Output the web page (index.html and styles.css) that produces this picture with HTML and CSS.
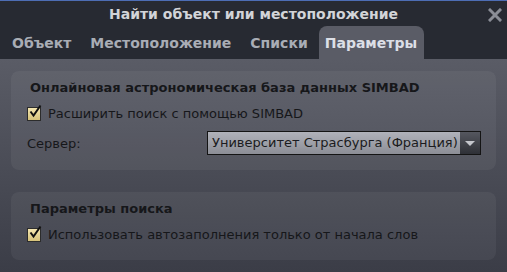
FILE: index.html
```html
<!DOCTYPE html>
<html lang="ru">
<head>
  <meta charset="UTF-8">
  <title>Найти объект или местоположение</title>
  <link rel="stylesheet" href="styles.css">
</head>
<body>
  <div class="dialog">
    <div class="header">
      <div class="titleRow">
        <span class="title">Найти объект или местоположение</span>
        <span class="close">
          <svg width="14" height="14" viewBox="0 0 14 14">
            <path d="M2 2 L12 12 M12 2 L2 12" stroke="#8a8d96" stroke-width="3" stroke-linecap="square"/>
          </svg>
        </span>
      </div>
      <div class="tabs">
        <div class="tab">Объект</div>
        <div class="tab">Местоположение</div>
        <div class="tab">Списки</div>
        <div class="tab active">Параметры</div>
      </div>
    </div>

    <div class="content">
      <div class="group">
        <div class="groupTitle">Онлайновая астрономическая база данных SIMBAD</div>
        <label class="check">
          <span class="box">
            <svg width="16" height="16" viewBox="0 0 16 16">
              <path d="M3.5 7.5 L6.5 11.5 L13.5 1.5" fill="none" stroke="#111" stroke-width="2"/>
            </svg>
          </span>
          Расширить поиск с помощью SIMBAD
        </label>
        <div class="row">
          <span>Сервер:</span>
          <div class="select">
            <span class="selectText">Университет Страсбурга (Франция)</span>
            <span class="arrow"></span>
          </div>
        </div>
      </div>

      <div class="group second">
        <div class="groupTitle">Параметры поиска</div>
        <label class="check">
          <span class="box">
            <svg width="16" height="16" viewBox="0 0 16 16">
              <path d="M3.5 7.5 L6.5 11.5 L13.5 1.5" fill="none" stroke="#111" stroke-width="2"/>
            </svg>
          </span>
          Использовать автозаполнения только от начала слов
        </label>
      </div>
    </div>
  </div>
</body>
</html>
```

FILE: styles.css
```css
body {
  margin: 0;
  padding: 0;
  font-family: 'DejaVu Sans', Verdana, sans-serif;
  font-size: 13px;
  background: #3c3e48;
}

.dialog {
  width: 507px;
  height: 272px;
  display: flex;
  flex-direction: column;
  overflow: hidden;
}

.header {
  background: #272a32;
  border-top: 1px solid #4d6db4;
}

.titleRow {
  height: 25px;
  display: flex;
  align-items: center;
  justify-content: center;
  position: relative;
}

.title {
  color: #d2d4d8;
  font-weight: bold;
  font-size: 14px;
}

.close {
  position: absolute;
  right: 5px;
  top: 7px;
  height: 14px;
}

.tabs {
  display: flex;
  padding-left: 2px;
  height: 33px;
  align-items: flex-end;
}

.tab {
  color: #a9adb5;
  font-weight: bold;
  font-size: 14px;
  padding: 0 9px 8px 10px;
}

.tab.active {
  background: #5a5c66;
  color: #dcdfe6;
  border-radius: 8px 8px 0 0;
  padding: 9px 7px 8px 6px;
  margin-left: 2px;
}

.content {
  flex: 1;
  background: linear-gradient(to bottom, #5a5c66, #3b3d47);
  padding: 12px 11px 0 11px;
}

.group {
  background: rgba(255, 255, 255, 0.05);
  border-radius: 8px;
  padding: 9px 15px 15px 16px;
  color: #16171a;
}

.group.second {
  margin-top: 22px;
  padding-bottom: 18px;
}

.groupTitle {
  font-weight: bold;
  padding-left: 3px;
  margin-bottom: 11px;
}

.check {
  display: flex;
  align-items: center;
  gap: 7px;
  margin-bottom: 10px;
}

.second .check {
  margin-bottom: 0;
}

.box {
  width: 12px;
  height: 12px;
  border: 1px solid #2c2c2c;
  background: linear-gradient(to bottom, #f4e6b0, #d6c27a);
  position: relative;
}

.box svg {
  position: absolute;
  left: -1px;
  top: -4px;
}

.row {
  display: flex;
  align-items: center;
  justify-content: space-between;
}

.select {
  width: 272px;
  height: 22px;
  border: 1px solid #141414;
  display: flex;
}

.selectText {
  flex: 1;
  background: linear-gradient(to bottom, #b0b2ba, #8c8e96);
  color: #1b1c20;
  padding-left: 4px;
  line-height: 22px;
  font-size: 13px;
}

.arrow {
  width: 20px;
  background: linear-gradient(to bottom, #55575f, #2e3036);
  position: relative;
}

.arrow::after {
  content: '';
  position: absolute;
  left: 5px;
  top: 9px;
  border-left: 5px solid transparent;
  border-right: 5px solid transparent;
  border-top: 5px solid #c4c6cc;
}
```
